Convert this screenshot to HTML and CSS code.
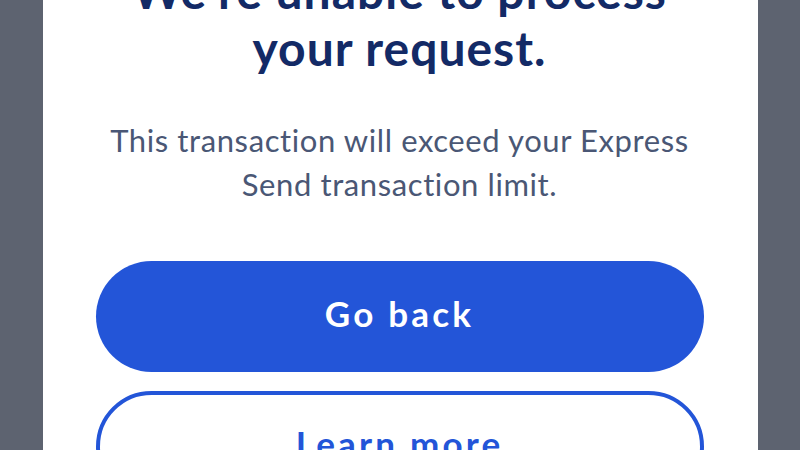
FILE: index.html
```html
<!DOCTYPE html>
<html lang="en">
<head>
<meta charset="utf-8">
<title>Unable to process</title>
<link rel="stylesheet" href="styles.css">
</head>
<body>
<main class="sheet">
  <h1 class="title">We’re unable to process<br>your request.</h1>
  <p class="message">This transaction will exceed your Express<br>Send transaction limit.</p>
  <div class="actions">
    <button class="btn btn-primary" type="button">Go back</button>
    <button class="btn btn-outline" type="button">Learn more</button>
  </div>
</main>
</body>
</html>
```
FILE: styles.css
```css
html, body {
  margin: 0;
  padding: 0;
  height: 100%;
}
body {
  background: #5d6370;
  overflow: hidden;
  font-family: "Lato", "Liberation Sans", sans-serif;
}
.sheet {
  box-sizing: border-box;
  width: 715px;
  height: 100%;
  margin: 0 auto;
  padding: 0 54px 0 53px;
  background: #ffffff;
  display: flex;
  flex-direction: column;
  text-align: center;
}
.title {
  margin: -38px 0 0;
  font-size: 48px;
  line-height: 57px;
  font-weight: 700;
  letter-spacing: 1px;
  color: #132a66;
}
.message {
  margin: 42px 0 0;
  font-size: 31px;
  line-height: 44px;
  font-weight: 400;
  letter-spacing: 0.6px;
  color: #4a5775;
}
.actions {
  margin-top: 55px;
  display: flex;
  flex-direction: column;
  gap: 19px;
}
.btn {
  box-sizing: border-box;
  width: 100%;
  height: 111px;
  padding: 0 0 8px;
  border-radius: 56px;
  font-family: inherit;
  font-size: 35px;
  font-weight: 700;
  letter-spacing: 3.2px;
  cursor: pointer;
  flex-shrink: 0;
}
.btn-primary {
  background: #2355d8;
  color: #ffffff;
  border: none;
}
.btn-outline {
  background: #ffffff;
  color: #2355d8;
  border: 4px solid #2355d8;
}
```
